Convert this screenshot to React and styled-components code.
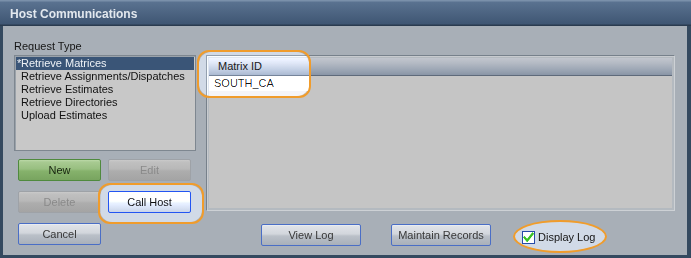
import React from 'react';
import styled, { createGlobalStyle, css } from 'styled-components';

const Global = createGlobalStyle`
  html, body { margin: 0; padding: 0; width: 691px; height: 258px; overflow: hidden; background: #34495f; }
  body { font-family: "Liberation Sans", Arial, sans-serif; font-size: 11px; color: #111; }
  * { box-sizing: border-box; }
`;

const Window = styled.div`
  width: 691px;
  height: 258px;
  display: flex;
  flex-direction: column;
  background: #34495f;
`;

const TitleBar = styled.div`
  height: 26px;
  flex: none;
  display: flex;
  align-items: center;
  padding: 2px 0 0 10px;
  background: linear-gradient(#7a90aa 0, #7a90aa 1px, #5a7290 2px, #3f5673 24px, #2a3b4f 25px, #2a3b4f 26px);
  color: #e2e8ee;
  font-weight: bold;
  font-size: 12px;
`;

const Body = styled.div`
  flex: 1;
  margin: 0 4px 3px 3px;
  background: #a8afb7;
  display: flex;
  gap: 10px;
  padding: 13px 0 0 11px;
`;

const LeftCol = styled.div`
  width: 182px;
  display: flex;
  flex-direction: column;
`;

const FieldLabel = styled.div`
  height: 14px;
  line-height: 14px;
  margin-bottom: 2px;
  color: #161616;
`;

const ListBox = styled.div`
  height: 96px;
  border: 1px solid #7e8790;
  box-shadow: inset 1px 1px 0 #9aa2aa;
  background: #c8c8c8;
  padding: 1px 1px 0 1px;
`;

const ListRow = styled.div`
  height: 13px;
  line-height: 13px;
  padding-left: 1px;
  white-space: nowrap;
  color: ${p => (p.$selected ? '#eef2f6' : '#111')};
  background: ${p => (p.$selected ? '#3a5577' : 'transparent')};
`;

const Mark = styled.span`
  display: inline-block;
  width: 4px;
`;

const ButtonGrid = styled.div`
  display: grid;
  grid-template-columns: 83px 83px;
  grid-auto-rows: 22px;
  column-gap: 7px;
  row-gap: 10px;
  margin: 8px 0 0 4px;
`;

const variants = {
  normal: css`
    border-color: #4a6ec6;
    color: #383838;
    background: linear-gradient(#f2f4f7 0, #e0e3e8 1px, #d2d6dc 45%, #bac0c8 55%, #a9b0ba 100%);
  `,
  focus: css`
    border-color: #1c44c0;
    color: #0c0c0c;
    background: linear-gradient(#e6e8ec 0, #d6dae0 40%, #bcc3ce 55%, #a2abb8 100%);
  `,
  green: css`
    border-color: #4f8a3e;
    color: #17240f;
    background: linear-gradient(#bcd9a8 0, #a8ca92 2px, #98bf80 45%, #86b26c 55%, #78a45f 100%);
  `,
  disabled: css`
    border-color: #9ea2a7;
    color: #8a8a8a;
    background: linear-gradient(#cacaca 0, #c0c0c0 2px, #b8b8b8 45%, #adadad 55%, #a4a4a4 100%);
  `,
};

const Button = styled.button`
  width: ${p => p.$w || 83}px;
  height: 22px;
  padding: 0;
  border: 1px solid;
  border-radius: 2px;
  font-family: "Liberation Sans", Arial, sans-serif;
  font-size: 11px;
  line-height: 20px;
  text-align: center;
  cursor: default;
  ${p => variants[p.$variant || 'normal']}
`;

const Spot = styled.div`
  position: relative;
`;

const Ring = styled.div`
  position: absolute;
  left: ${p => p.$x}px;
  top: ${p => p.$y}px;
  width: ${p => p.$w}px;
  height: ${p => p.$h}px;
  border: 2px solid #f09c2c;
  border-radius: ${p => (p.$oval ? '50%' : '12px')};
  pointer-events: none;
  &::before {
    content: '';
    position: absolute;
    inset: 0;
    border-radius: inherit;
    background: rgb(50, 50, 53);
    mix-blend-mode: color-dodge;
  }
`;

const RightCol = styled.div`
  width: 469px;
  margin-top: 16px;
  display: flex;
  flex-direction: column;
`;

const GridFrame = styled.div`
  position: relative;
  height: 156px;
  border-top: 1px solid #77818b;
  border-left: 1px solid #77818b;
  border-right: 1px solid #cdd1d5;
  border-bottom: 1px solid #cdd1d5;
  padding: 2px;
  background: #b4bac0;
  box-shadow: inset 1px 1px 0 #c8cbcf;
`;

const GridInner = styled.div`
  height: 100%;
  background: #c5c5c5;
  display: flex;
  flex-direction: column;
`;

const HeaderRow = styled.div`
  height: 18px;
  display: flex;
  background: linear-gradient(#c2c6ce 0, #b4bac4 30%, #9ca6b4 70%, #8995a6 100%);
  border-bottom: 1px solid #5e6a7a;
`;

const HeaderCell = styled.div`
  width: 100px;
  padding-left: 9px;
  line-height: 17px;
  color: #141414;
`;

const DataRow = styled.div`
  display: flex;
  height: 15px;
`;

const DataCell = styled.div`
  width: 100px;
  padding-left: 5px;
  line-height: 15px;
  background: #ffffff;
  color: #111;
`;

const ActionRow = styled.div`
  display: flex;
  align-items: flex-start;
  height: 22px;
  margin-top: 13px;
  padding-left: 55px;
  gap: 30px;
`;

const CheckLabel = styled.label`
  position: relative;
  display: flex;
  align-items: center;
  gap: 3px;
  height: 16px;
  margin: 5px 0 0 1px;
  color: #111;
`;

const CheckBox = styled.span`
  width: 13px;
  height: 13px;
  border: 1px solid #1f3c86;
  background: linear-gradient(135deg, #d4d8e0, #f2f4f6);
  display: flex;
  align-items: center;
  justify-content: center;
`;

const items = [
  'Retrieve Matrices',
  'Retrieve Assignments/Dispatches',
  'Retrieve Estimates',
  'Retrieve Directories',
  'Upload Estimates',
];

export default function App() {
  return (
    <Window>
      <Global />
      <TitleBar>Host Communications</TitleBar>
      <Body>
        <LeftCol>
          <FieldLabel>Request Type</FieldLabel>
          <ListBox>
            {items.map((t, i) => (
              <ListRow key={t} $selected={i === 0}>
                <Mark>{i === 0 ? '*' : ''}</Mark>
                {t}
              </ListRow>
            ))}
          </ListBox>
          <ButtonGrid>
            <Button $variant="green">New</Button>
            <Button $variant="disabled">Edit</Button>
            <Button $variant="disabled">Delete</Button>
            <Spot>
              <Button $variant="focus">Call Host</Button>
              <Ring $x={-10} $y={-8} $w={106} $h={41} />
            </Spot>
            <Button>Cancel</Button>
          </ButtonGrid>
        </LeftCol>
        <RightCol>
          <GridFrame>
            <GridInner>
              <HeaderRow>
                <HeaderCell>Matrix ID</HeaderCell>
              </HeaderRow>
              <DataRow>
                <DataCell>SOUTH_CA</DataCell>
              </DataRow>
            </GridInner>
            <Ring $x={-10} $y={-6} $w={114} $h={48} />
          </GridFrame>
          <ActionRow>
            <Button $w={100}>View Log</Button>
            <Button $w={100}>Maintain Records</Button>
            <CheckLabel>
              <CheckBox>
                <svg width="11" height="11" viewBox="0 0 11 11">
                  <path d="M1.5 5.5 L4.2 8.6 L9.6 1.8" fill="none" stroke="#2f9a1e" strokeWidth="2.4" strokeLinecap="square" />
                </svg>
              </CheckBox>
              Display Log
              <Ring $oval $x={-9} $y={-9} $w={94} $h={33} />
            </CheckLabel>
          </ActionRow>
        </RightCol>
      </Body>
    </Window>
  );
}
